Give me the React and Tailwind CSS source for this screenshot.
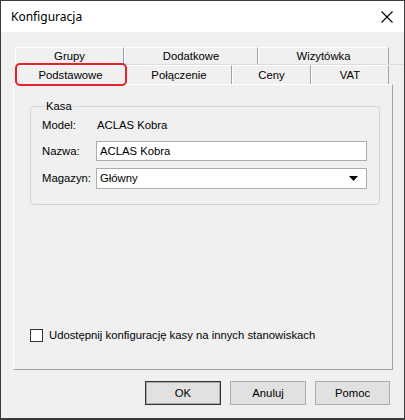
import React from "react";

const F = { fontFamily: '"Liberation Sans", Arial, sans-serif' };

function Tab({ label, w }) {
  return (
    <div
      className="h-full flex items-center justify-center border-t border-l border-r border-t-white border-l-white border-r-[#a0a0a0] text-[11.3px] text-black bg-[#f0f0f0]"
      style={{ width: w }}
    >
      {label}
    </div>
  );
}

export default function App() {
  return (
    <div className="w-[405px] h-[420px] bg-[#f0f0f0] border border-b-2 border-[#3c3c3c] flex flex-col overflow-hidden" style={F}>
      {/* title bar */}
      <div className="h-[31px] bg-white flex items-center justify-between pl-[10px] pr-[11px] shrink-0">
        <span className="text-[12px] text-black mt-[1px]" style={{ fontFamily: '"Noto Sans", "Open Sans", sans-serif' }}>Konfiguracja</span>
        <svg width="12" height="12" viewBox="0 0 12 12" className="mt-[1px]">
          <path d="M0.5 0.5 L11.5 11.5 M11.5 0.5 L0.5 11.5" stroke="#000" strokeWidth="1.1" />
        </svg>
      </div>

      <div className="flex flex-col pl-[12px] pt-[15px]">
        {/* tabs */}
        <div className="relative ml-[2px] flex flex-col">
          <div className="flex h-[17px]">
            <Tab label="Grupy" w={109} />
            <Tab label="Dodatkowe" w={134} />
            <Tab label="Wizytówka" w={131} />
          </div>
          <div className="flex h-[20px] border-t border-t-[#dcdcdc]">
            <Tab label="Podstawowe" w={111} />
            <Tab label="Połączenie" w={106} />
            <Tab label="Ceny" w={79} />
            <Tab label="VAT" w={78} />
          </div>
          <div className="absolute left-[0px] top-[16px] w-[112px] h-[23px] border-2 border-[#e8202a] rounded-[5px]" />
        </div>

        {/* panel */}
        <div className="w-[380px] h-[286px] border border-t-white border-l-white border-r-[#a0a0a0] border-b-[#a0a0a0] flex flex-col pl-[16px] pt-[15px]">
          <fieldset className="w-[350px] h-[105px] border border-[#d5d5d5] rounded-[3px] pl-[11px] pr-[12px] pt-[3px] m-0">
            <legend className="px-[1px] ml-[3px] text-[11.3px] text-black leading-[13px]">Kasa</legend>
            <div className="flex items-center h-[18px] text-[11.3px] text-black">
              <span className="w-[55px]">Model:</span>
              <span>ACLAS Kobra</span>
            </div>
            <div className="flex items-center mt-[7px] text-[11.3px] text-black">
              <span className="w-[54px]">Nazwa:</span>
              <div className="w-[271px] h-[20px] bg-white border border-[#abadb3] flex items-center pl-[3px]">ACLAS Kobra</div>
            </div>
            <div className="flex items-center mt-[7px] text-[11.3px] text-black">
              <span className="w-[54px]">Magazyn:</span>
              <div className="w-[271px] h-[21px] bg-white border border-[#abadb3] flex items-center justify-between pl-[3px] pr-[8px]">
                <span>Główny</span>
                <svg width="9" height="5" viewBox="0 0 9 5"><path d="M0 0 H9 L4.5 5 Z" fill="#000" /></svg>
              </div>
            </div>
          </fieldset>

          <div className="flex items-center mt-[122px] text-[11.3px] text-black">
            <div className="w-[13px] h-[13px] bg-white border border-[#333]" />
            <span className="ml-[6px]">Udostępnij konfigurację kasy na innych stanowiskach</span>
          </div>
        </div>

        {/* buttons */}
        <div className="flex justify-end gap-[9px] mt-[11px] pr-[14px] text-[11.3px] text-black">
          <button className="w-[76px] h-[24px] bg-[#e1e1e1] border border-[#333] shadow-[inset_0_0_0_1px_#adadad]">OK</button>
          <button className="w-[76px] h-[24px] bg-[#e1e1e1] border border-[#adadad]">Anuluj</button>
          <button className="w-[75px] h-[24px] bg-[#e1e1e1] border border-[#adadad]">Pomoc</button>
        </div>
      </div>
    </div>
  );
}
